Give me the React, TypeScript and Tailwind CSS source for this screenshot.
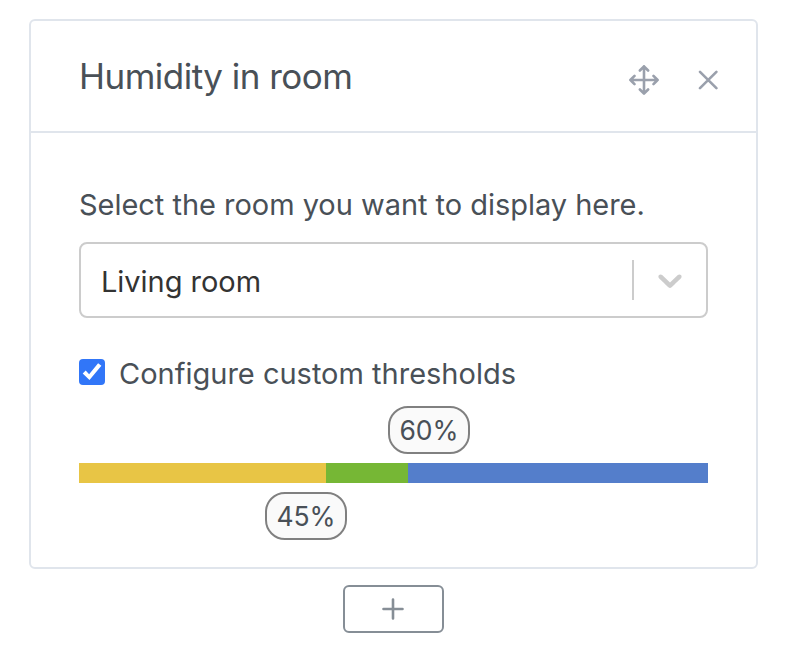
const segments = [
  { name: 'dry', className: 'w-[247px] bg-[#e8c545]' },
  { name: 'good', className: 'w-[82px] bg-[#76b735]' },
  { name: 'humid', className: 'flex-1 bg-[#547ecb]' },
];

const bubble =
  'absolute flex h-[48px] w-[82px] items-center justify-center rounded-[20px] border-2 border-[#808080] bg-[#fafafa] pl-px pt-px text-[26.5px] leading-none';

function Header() {
  return (
    <header className="flex h-[112px] items-center justify-between border-b-2 border-[#e0e5ec] pl-[48px] pr-[38px]">
      <h3 className="whitespace-nowrap text-[35px] leading-[42px] tracking-[-0.52px]">Humidity in room</h3>
      <div className="flex items-center gap-[39px] pt-[7px]">
        <svg width="30" height="30" viewBox="0 0 30 30" fill="none" stroke="#9aa0ac" strokeWidth="2.6" strokeLinecap="round" strokeLinejoin="round">
          <path d="M15 1.4v27.2M1.4 15h27.2M10.9 5.5 15 1.4l4.1 4.1M10.9 24.5l4.1 4.1 4.1-4.1M5.5 10.9 1.4 15l4.1 4.1M24.5 10.9l4.1 4.1-4.1 4.1" />
        </svg>
        <svg width="20" height="20" viewBox="0 0 20 20" fill="none" stroke="#9aa0ac" strokeWidth="2.6" strokeLinecap="round">
          <path d="m2 1.8 16.4 16.4M18.4 1.8 2 18.2" />
        </svg>
      </div>
    </header>
  );
}

export default function App() {
  return (
    <div className="h-[668px] w-[788px] bg-white pl-[29px] pt-[19px] font-['Inter',sans-serif] text-[#495057]">
      <div className="h-[550px] w-[729px] rounded-[6px] border-2 border-[#e0e5ec]">
        <Header />
        <div className="px-[48px] pt-[54px]">
          <p className="whitespace-nowrap text-[29px] leading-[36px] tracking-[-0.03px]">Select the room you want to display here.</p>
          <div className="mt-[19px] flex h-[76px] items-center rounded-[8px] border-2 border-[#cccccc] pl-[20px] text-[#333333]">
            <span className="flex-1 pt-[3px] text-[29px] leading-[36px] tracking-[-0.04px]">Living room</span>
            <span className="h-[40px] w-[2px] bg-[#cccccc]" />
            <svg className="mx-[16px]" width="40" height="40" viewBox="0 0 20 20" fill="#cccccc">
              <path d="M4.516 7.548c0.436-0.446 1.043-0.481 1.576 0l3.908 3.747 3.908-3.747c0.533-0.481 1.141-0.446 1.574 0 0.436 0.445 0.408 1.197 0 1.615-0.406 0.418-4.695 4.502-4.695 4.502-0.217 0.223-0.502 0.335-0.787 0.335s-0.57-0.112-0.789-0.335c0 0-4.287-4.084-4.695-4.502s-0.436-1.17 0-1.615z" />
            </svg>
          </div>
          <label className="mt-[38px] flex h-[36px] items-start gap-[14px]">
            <span role="checkbox" aria-checked="true" className="mt-[3px] h-[26px] w-[26px] rounded-[4px] bg-[#3176f8]">
              <svg width="26" height="26" viewBox="0 0 26 26" fill="#fff">
                <path d="M6.7 11.6 10.1 15.2 19.1 4.2 22.4 6.7 10.5 21 3.7 14.4z" />
              </svg>
            </span>
            <span className="whitespace-nowrap text-[29px] leading-[36px]">Configure custom thresholds</span>
          </label>
          <div className="relative mt-[71px] flex h-[20px]">
            {segments.map((s) => (
              <div key={s.name} className={s.className} />
            ))}
            <span className={`${bubble} bottom-[29px] left-[308.5px]`}>60%</span>
            <span className={`${bubble} left-[185.5px] top-[29px]`}>45%</span>
          </div>
        </div>
      </div>
      <button className="ml-[314px] mt-[16px] flex h-[48px] w-[101px] items-center justify-center rounded-[6px] border-2 border-[#868e96]">
        <svg width="23" height="22" viewBox="0 0 23 22" fill="none" stroke="#868e96" strokeWidth="2.6" strokeLinecap="round">
          <path d="M11 1.5v19M1.5 11h19" />
        </svg>
      </button>
    </div>
  );
}
